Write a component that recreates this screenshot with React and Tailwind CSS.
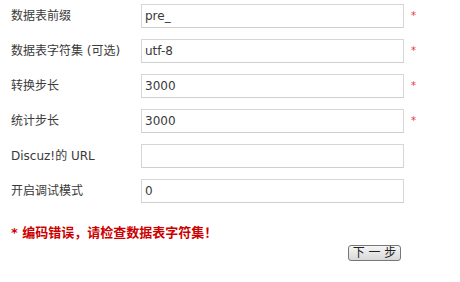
import React from "react";

const rows = [
  { label: "数据表前缀", value: "pre_", required: true },
  { label: "数据表字符集 (可选)", value: "utf-8", required: true },
  { label: "转换步长", value: "3000", required: true },
  { label: "统计步长", value: "3000", required: true },
  { label: "Discuz!的 URL", value: "", required: false },
  { label: "开启调试模式", value: "0", required: false },
];

function Row({ label, value, required }) {
  return (
    <div className="flex items-center h-[24px] mb-[11px]">
      <div className="w-[130px] text-[12px] text-[#3a3a3a]">{label}</div>
      <input
        defaultValue={value}
        className="w-[263px] h-[24px] border border-[#d6d6d6] border-b-[#cfcfcf] bg-white px-[3px] text-[12px] text-[#3a3a3a] outline-none"
      />
      {required && (
        <span className="ml-[7px] text-[10px] text-[#e33] leading-none">*</span>
      )}
    </div>
  );
}

export default function App() {
  return (
    <div
      className="w-[460px] h-[282px] bg-white pl-[11px] pt-[4px]"
      style={{ fontFamily: '"DejaVu Sans", "Noto Sans CJK SC", sans-serif' }}
    >
      {rows.map((r) => (
        <Row key={r.label} {...r} />
      ))}
      <p className="mt-[20px] text-[13px] font-bold text-[#cc0000] leading-[20px]">
        * 编码错误，请检查数据表字符集！
      </p>
      <div className="flex w-[390px] justify-end mt-[2px]">
        <button className="h-[16px] w-[53px] rounded-[3px] border border-[#777] bg-gradient-to-b from-[#f6f6f6] to-[#d8d8d8] text-[12px] leading-none text-[#222]">
          下 一 步
        </button>
      </div>
    </div>
  );
}
